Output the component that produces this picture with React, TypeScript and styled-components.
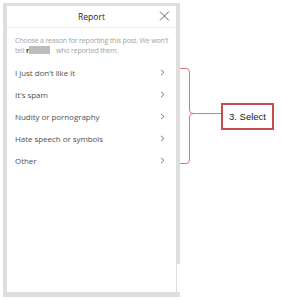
import { FC } from 'react';
import styled, { createGlobalStyle } from 'styled-components';

const reasons = [
  "I just don't like it",
  "It's spam",
  'Nudity or pornography',
  'Hate speech or symbols',
  'Other',
];

const GlobalStyle = createGlobalStyle`
  html, body {
    margin: 0;
    padding: 0;
    background: #ffffff;
  }
  body {
    font-family: 'Open Sans', 'Noto Sans', sans-serif;
  }
`;

const Chevron: FC = () => (
  <svg width="5" height="7" viewBox="0 0 5 7">
    <polyline points="1,0.8 4,3.5 1,6.2" fill="none" stroke="#6b6b6b" strokeWidth="0.9" />
  </svg>
);

const CloseIcon: FC = () => (
  <svg width="11" height="10" viewBox="0 0 11 10">
    <path d="M1 0.5 L10 9.5 M10 0.5 L1 9.5" stroke="#555" strokeWidth="0.9" fill="none" />
  </svg>
);

const Brace: FC = () => (
  <svg width="41" height="100" viewBox="0 0 41 100">
    <path
      d="M0 2.5 H6 Q9.5 2.5 9.5 6 V44 Q9.5 47.5 13 47.5 H41 M13 47.5 Q9.5 47.5 9.5 51 V94 Q9.5 97.5 6 97.5 H0"
      fill="none"
      stroke="#d9767a"
      strokeWidth="1"
    />
  </svg>
);

export default function App() {
  return (
    <Page>
      <GlobalStyle />
      <Panel>
        <Header>
          <Title>Report</Title>
          <CloseButton>
            <CloseIcon />
          </CloseButton>
        </Header>
        <Description>
          <Line>Choose a reason for reporting this post. We won't</Line>
          <Line>
            tell <b>r</b>
            <Redacted />
            who reported them.
          </Line>
        </Description>
        <ReasonList>
          {reasons.map((r) => (
            <ReasonRow key={r}>
              <span>{r}</span>
              <Chevron />
            </ReasonRow>
          ))}
        </ReasonList>
      </Panel>
      <Callout>
        <Brace />
        <StepBox>3. Select</StepBox>
      </Callout>
    </Page>
  );
}

const Page = styled.div`
  display: flex;
  align-items: flex-start;
  padding: 3px 0 0 3px;
  width: 282px;
  height: 300px;
  box-sizing: border-box;
`;

const Panel = styled.div`
  position: relative;
  width: 177px;
  height: 294px;
  box-sizing: border-box;
  border: 4px solid #dedede;
  border-top-width: 3px;
  border-bottom-width: 5px;
  background: #fff;
  display: flex;
  flex-direction: column;

  &::after {
    content: '';
    position: absolute;
    right: -4px;
    top: 258px;
    width: 3px;
    height: 28px;
    background: #fff;
  }
`;

const Header = styled.div`
  position: relative;
  height: 21px;
  border-bottom: 1px solid #ededed;
  display: flex;
  align-items: center;
  justify-content: center;
`;

const Title = styled.span`
  font-size: 8.5px;
  color: #262626;
`;

const CloseButton = styled.span`
  position: absolute;
  right: 6px;
  top: 5px;
  display: flex;
`;

const Description = styled.div`
  padding: 8px 4px 0 8px;
  font-size: 7px;
  line-height: 9.5px;
  letter-spacing: -0.17px;
  color: #a3a3a3;

  b {
    color: #333;
  }
`;

const Line = styled.div`
  white-space: nowrap;
`;

const Redacted = styled.span`
  display: inline-block;
  width: 21px;
  height: 8px;
  background: #bdbdbd;
  vertical-align: -1px;
  margin-right: 6px;
`;

const ReasonList = styled.div`
  margin-top: 6px;
  display: flex;
  flex-direction: column;
`;

const ReasonRow = styled.div`
  height: 22px;
  display: flex;
  align-items: center;
  justify-content: space-between;
  padding: 0 11px 0 8px;
  font-size: 8px;
  letter-spacing: -0.05px;
  color: #505050;
`;

const Callout = styled.div`
  display: flex;
  align-items: center;
  margin-top: 63px;
`;

const StepBox = styled.div`
  width: 53px;
  height: 27px;
  box-sizing: border-box;
  border: 2px solid #c0504d;
  display: flex;
  align-items: center;
  padding-left: 6px;
  font-family: 'Liberation Sans', sans-serif;
  font-size: 9.5px;
  color: #1a1a1a;
`;
